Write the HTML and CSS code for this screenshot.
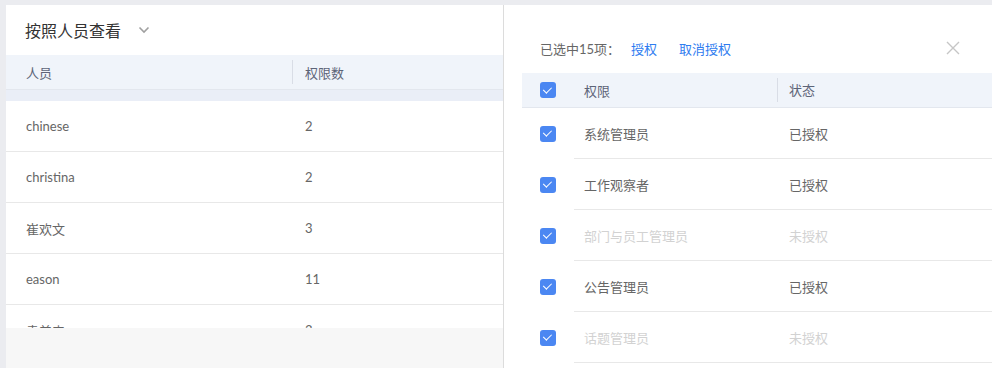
FILE: index.html
```html
<!DOCTYPE html>
<html lang="zh-CN">
<head>
  <meta charset="UTF-8">
  <title>权限管理</title>
  <link rel="stylesheet" href="styles.css">
</head>
<body>

<div class="page">
  <section class="card">
    <div class="card-title">
      <span>按照人员查看</span>
      <svg class="chevron" width="12" height="8" viewBox="0 0 12 8"><path d="M1.5 1.5 L6 6 L10.5 1.5" fill="none" stroke="#a0a0a0" stroke-width="1.6"/></svg>
    </div>
    <div class="table-head">
      <div class="th col-name">人员</div>
      <div class="th col-count"><i class="divider"></i>权限数</div>
    </div>
    <div class="head-band"></div>
    <div class="table-body">
      <div class="tr"><div class="col-name">chinese</div><div class="col-count">2</div></div>
      <div class="tr"><div class="col-name">christina</div><div class="col-count">2</div></div>
      <div class="tr"><div class="col-name">崔欢文</div><div class="col-count">3</div></div>
      <div class="tr"><div class="col-name">eason</div><div class="col-count">11</div></div>
      <div class="tr"><div class="col-name">袁美森</div><div class="col-count">3</div></div>
    </div>
    <div class="card-foot"></div>
  </section>

  <aside class="drawer">
    <div class="toolbar">
      <span class="count">已选中15项：</span>
      <a class="link">授权</a>
      <a class="link">取消授权</a>
      <svg class="close" width="14" height="14" viewBox="0 0 14 14"><path d="M1 1 L13 13 M13 1 L1 13" stroke="#c6c6c6" stroke-width="1.4"/></svg>
    </div>
    <div class="perm-table">
      <div class="perm-head">
        <div class="pc-check"><span class="checkbox"></span></div>
        <div class="pc-name">权限</div>
        <div class="pc-state"><i class="divider"></i>状态</div>
      </div>
      <div class="perm-row">
        <div class="pc-check"><span class="checkbox"></span></div>
        <div class="pc-name">系统管理员</div>
        <div class="pc-state">已授权</div>
      </div>
      <div class="perm-row">
        <div class="pc-check"><span class="checkbox"></span></div>
        <div class="pc-name">工作观察者</div>
        <div class="pc-state">已授权</div>
      </div>
      <div class="perm-row off">
        <div class="pc-check"><span class="checkbox"></span></div>
        <div class="pc-name">部门与员工管理员</div>
        <div class="pc-state">未授权</div>
      </div>
      <div class="perm-row">
        <div class="pc-check"><span class="checkbox"></span></div>
        <div class="pc-name">公告管理员</div>
        <div class="pc-state">已授权</div>
      </div>
      <div class="perm-row off">
        <div class="pc-check"><span class="checkbox"></span></div>
        <div class="pc-name">话题管理员</div>
        <div class="pc-state">未授权</div>
      </div>
    </div>
  </aside>
</div>

</body>
</html>
```

FILE: styles.css
```css
body {
  margin: 0;
  background: #ebecf0;
  font-family: Lato, "Noto Sans CJK SC", sans-serif;
  font-size: 13px;
  color: #666;
}

.page {
  display: flex;
  height: 363px;
  padding: 5px 0 0 6px;
  overflow: hidden;
}

/* left card */
.card {
  width: 497px;
  background: #fff;
  display: flex;
  flex-direction: column;
}

.card-title {
  height: 50px;
  display: flex;
  align-items: center;
  padding-left: 19px;
  font-size: 16px;
  color: #333;
}

.chevron {
  margin-left: 17px;
}

.table-head {
  display: flex;
  height: 34px;
  align-items: center;
  background: #f0f4fa;
  border-bottom: 1px solid #e3e7ee;
  color: #5d6478;
}

.head-band {
  height: 11px;
  background: #eaeef7;
}

.col-name {
  width: 286px;
  padding-left: 20px;
  box-sizing: border-box;
}

.col-count {
  position: relative;
  padding-left: 13px;
}

.divider {
  position: absolute;
  left: 0;
  top: 50%;
  width: 1px;
  height: 24px;
  margin-top: -12px;
  background: #d9dde6;
}

.table-body {
  height: 227px;
  overflow: hidden;
}

.tr {
  display: flex;
  align-items: center;
  height: 50px;
  border-bottom: 1px solid #e8e8e8;
  color: #666;
}

.card-foot {
  flex: 1;
  background: #f7f7f7;
}

/* right drawer */
.drawer {
  width: 470px;
  background: #fff;
  border-left: 1px solid #dcdcdc;
  padding: 18px 0 0 18px;
}

.toolbar {
  height: 50px;
  display: flex;
  align-items: center;
  padding-left: 18px;
}

.link {
  color: #2f7cf0;
  margin-left: 11px;
}

.link + .link {
  margin-left: 22px;
}

.close {
  margin-left: auto;
  margin-right: 32px;
}

.perm-head,
.perm-row {
  display: grid;
  grid-template-columns: 52px 203px 1fr;
  align-items: center;
}

.perm-head {
  height: 34px;
  background: #f0f4fa;
  border-bottom: 1px solid #e3e7ee;
  color: #5d6478;
}

.perm-row > div {
  height: 50px;
  display: flex;
  align-items: center;
}

.perm-row .pc-name,
.perm-row .pc-state {
  border-bottom: 1px solid #e8e8e8;
}

.pc-check {
  padding-left: 18px;
}

.pc-name {
  padding-left: 10px;
}

.pc-state {
  position: relative;
  padding-left: 12px;
}

.perm-head .pc-state {
  height: 34px;
  line-height: 34px;
}

.off {
  color: #d2d2d2;
}

.checkbox {
  display: block;
  width: 16px;
  height: 16px;
  border-radius: 3px;
  background: #4b87f2;
  position: relative;
}

.checkbox::after {
  content: "";
  position: absolute;
  left: 5px;
  top: 2.5px;
  width: 3.5px;
  height: 7px;
  border: solid #fff;
  border-width: 0 1.8px 1.8px 0;
  transform: rotate(45deg);
}
```
